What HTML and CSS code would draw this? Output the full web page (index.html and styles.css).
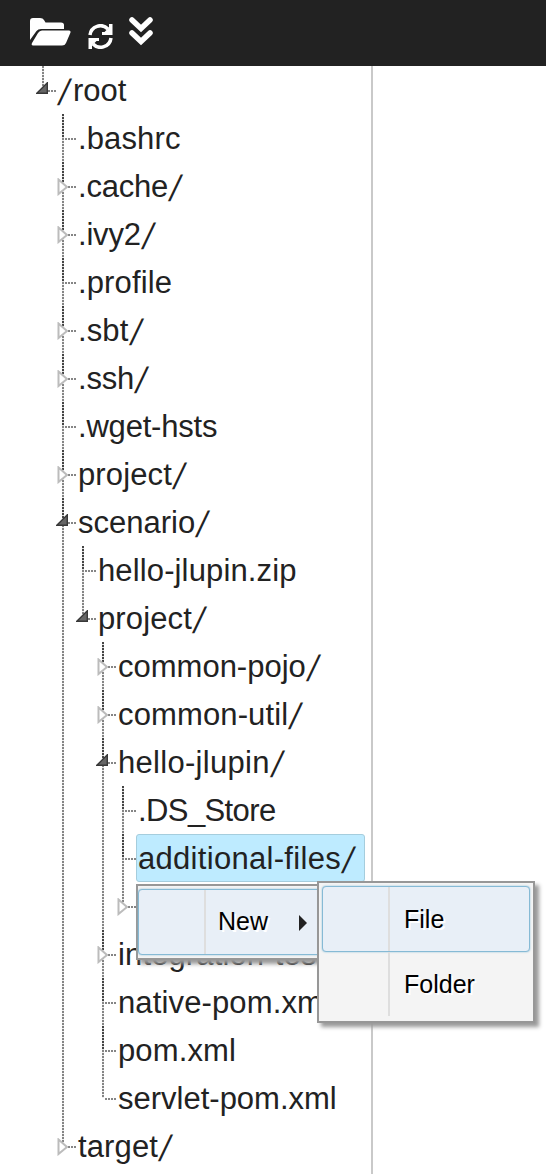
FILE: index.html
```html
<!DOCTYPE html>
<html lang="en">
<head>
<meta charset="utf-8">
<title>Files</title>
<link rel="stylesheet" href="styles.css">
</head>
<body>
<svg class="defs" aria-hidden="true">
<symbol id="closed" viewBox="0 0 12 18"><path d="M1.500 1.500V16L10 9Z" fill="#fff" stroke="#bcbcbc" stroke-width="2"/></symbol>
<symbol id="open" viewBox="0 0 12 12"><path d="M.8 11.300L11.300 .8V11.300Z" fill="#666" stroke="#383838" stroke-width="1.400"/></symbol>
</svg>
<header class="toolbar">
<svg class="icon-folder" viewBox="0 0 41 28"><path d="M0 22V3Q0 0 3 0H10Q13 0 14 2L15.500 4.500H31Q34 4.500 34 7V11H11Q8 11 6.500 13Z"/><path d="M8 15Q9.500 12.500 12 12.500H39Q41 12.500 40.500 14.500L36 25Q35 27.500 32 27.500H3Q1 27.500 2 25Z"/></svg>
<svg class="icon-refresh" viewBox="0 0 25 25"><path d="M2 11A10.500 10.500 0 0 1 20 5M23 14A10.500 10.500 0 0 1 5 20" fill="none" stroke="#fff" stroke-width="3.500"/><path d="M24.500 0V11H14V8H16.500L21 3.500V0ZM.5 25V14H11V17H8.500L4 21.500V25Z"/></svg>
<svg class="icon-down" viewBox="0 0 24 30"><path d="M3 3L12 11.500L21 3M3 16L12 24.500L21 16" fill="none" stroke="#fff" stroke-width="5.500" stroke-linecap="round"/></svg>
</header>
<main class="workspace">
<nav class="explorer">
<ul class="tree root">
<li class="node last"><div class="row"><svg class="open"><use href="#open"/></svg><span class="label"><i>/</i>root</span></div>
<ul class="tree">
<li class="node"><div class="row"><span class="label wide">.bashrc</span></div></li>
<li class="node"><div class="row"><svg class="closed"><use href="#closed"/></svg><span class="label snug">.cache<i>/</i></span></div></li>
<li class="node"><div class="row"><svg class="closed"><use href="#closed"/></svg><span class="label snug">.ivy2<i>/</i></span></div></li>
<li class="node"><div class="row"><span class="label wide">.profile</span></div></li>
<li class="node"><div class="row"><svg class="closed"><use href="#closed"/></svg><span class="label wide">.sbt<i>/</i></span></div></li>
<li class="node"><div class="row"><svg class="closed"><use href="#closed"/></svg><span class="label snug">.ssh<i>/</i></span></div></li>
<li class="node"><div class="row"><span class="label snug">.wget-hsts</span></div></li>
<li class="node"><div class="row"><svg class="closed"><use href="#closed"/></svg><span class="label wide">project<i>/</i></span></div></li>
<li class="node"><div class="row"><svg class="open"><use href="#open"/></svg><span class="label">scenario<i>/</i></span></div>
<ul class="tree">
<li class="node"><div class="row"><span class="label wide">hello-jlupin.zip</span></div></li>
<li class="node last"><div class="row"><svg class="open"><use href="#open"/></svg><span class="label wide">project<i>/</i></span></div>
<ul class="tree">
<li class="node"><div class="row"><svg class="closed"><use href="#closed"/></svg><span class="label">common-pojo<i>/</i></span></div></li>
<li class="node"><div class="row"><svg class="closed"><use href="#closed"/></svg><span class="label wide">common-util<i>/</i></span></div></li>
<li class="node"><div class="row"><svg class="open"><use href="#open"/></svg><span class="label wider">hello-jlupin<i>/</i></span></div>
<ul class="tree">
<li class="node"><div class="row"><span class="label tight">.DS_Store</span></div></li>
<li class="node"><div class="row"><span class="label wider selected">additional-files<i>/</i></span></div></li>
<li class="node last"><div class="row"><svg class="closed"><use href="#closed"/></svg></div></li>
</ul></li>
<li class="node"><div class="row"><svg class="closed"><use href="#closed"/></svg><span class="label wide">integration-test<i>/</i></span></div></li>
<li class="node"><div class="row"><span class="label wide">native-pom.xml</span></div></li>
<li class="node"><div class="row"><span class="label wide">pom.xml</span></div></li>
<li class="node last"><div class="row"><span class="label">servlet-pom.xml</span></div></li>
</ul></li>
</ul></li>
<li class="node last"><div class="row"><svg class="closed"><use href="#closed"/></svg><span class="label wide">target<i>/</i></span></div></li>
</ul></li>
</ul>
</nav>
</main>
<div class="menu context"><div class="item hover"><span>New</span><svg class="arrow" viewBox="0 0 8 16"><path d="M0 0L8 8L0 16Z"/></svg></div></div>
<div class="menu submenu"><div class="item hover"><span>File</span></div><div class="item"><span>Folder</span></div></div>
</body>
</html>
```
FILE: styles.css
```css
* { box-sizing: border-box; }
body { margin: 0; width: 546px; height: 1174px; overflow: hidden; background: #fff; color: #222; font-family: "Liberation Sans", Arial, sans-serif; font-size: 31px; }
.defs { position: absolute; width: 0; height: 0; }
.toolbar { height: 66px; background: #222; display: flex; align-items: flex-start; padding: 17px 0 0 30px; }
.toolbar svg { fill: #fff; }
.icon-folder { width: 41px; height: 28px; margin-top: 1px; }
.icon-refresh { width: 25px; height: 25px; margin: 7px 0 0 17px; }
.icon-down { width: 24px; height: 30px; margin-left: 16px; }
.explorer { width: 373px; height: 1108px; border-right: 2px solid #c9c9c9; padding-left: 37px; overflow: hidden; }
.tree { list-style: none; margin: 0; padding: 0 0 0 20px; }
.tree.root { padding: 0; }
/* Dotted guide beside every node, darker over the upper half of a row */
.node { background: repeating-linear-gradient(#444 0 2px, #ddd 2px 3px) 5px 0 / 2px 24px no-repeat, repeating-linear-gradient(#858585 0 2px, #eee 2px 3px) 5px 0 / 2px 100% no-repeat; }
.node.last { background: repeating-linear-gradient(#858585 0 2px, #eee 2px 3px) 5px 0 / 2px 24px no-repeat; }
.row { height: 48px; display: flex; align-items: center; position: relative; padding-left: 21px; background: repeating-linear-gradient(90deg, #858585 0 2px, #fff 2px 3px) 8px 24px / 11px 2px no-repeat; }
.label { white-space: nowrap; line-height: 48px; padding-top: 2px; }
.label i { display: inline-block; width: 15px; font-style: normal; line-height: 1; letter-spacing: 0; transform: translateY(2px) scaleY(1.18) skewX(-16deg); transform-origin: 4px 50%; padding-left: 3px; }
.root > .node > .row { padding-left: 20px; }
.root > .node > .row > .label > i { width: 16px; }
.tight { letter-spacing: -.6px; }
.snug { letter-spacing: -.2px; }
.wide { letter-spacing: .13px; }
.wider { letter-spacing: .3px; }
.closed { position: absolute; left: 0; top: 16px; width: 12px; height: 18px; }
.open { position: absolute; left: -1px; top: 16px; width: 12px; height: 12px; }
.selected { height: 48px; width: 229px; margin-left: -2px; padding: 0 0 0 1px; background: #beebff; border: 1px solid #a5cddd; border-radius: 3px; line-height: 48px; }
.menu { position: absolute; background: #f4f4f4; border: 2px solid #979797; box-shadow: 4px 4px 4px #999; color: #000; font-size: 25px; padding: 3px; }
.context { left: 136px; top: 884px; width: 220px; height: 76px; padding: 3px 0; }
.submenu { left: 317px; top: 881px; width: 218px; height: 142px; }
.item { height: 66px; display: flex; align-items: center; position: relative; padding-left: 82px; text-shadow: 2px 2px 0 #fff; background: linear-gradient(#dedede, #dedede) 66px 0 / 2px 100% no-repeat; }
.submenu .item + .item { height: 64px; }
.hover { background-color: #e8eff7; background-position-x: 65px; border: 1px solid #86bad5; border-radius: 4px; box-shadow: 0 0 2px #86bad5; padding-left: 81px; }
.context .item { padding-left: 79px; padding-bottom: 2px; }
.arrow { position: absolute; left: 160px; top: 25px; width: 8px; height: 16px; fill: #222; }
```
